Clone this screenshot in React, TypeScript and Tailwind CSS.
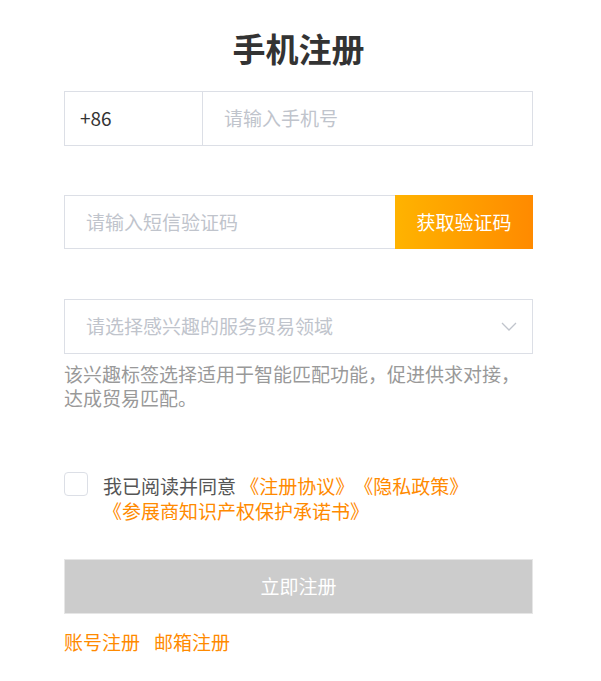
import { useState } from "react";

const font = "font-['Microsoft_YaHei','Noto_Sans_CJK_SC',sans-serif]";

export default function App() {
  const [agreed, setAgreed] = useState(false);

  return (
    <div className={`min-h-screen bg-white ${font}`}>
      <div className="ml-[64px] w-[469px] pt-[28px]">
        <h1 className="text-center text-[33px] leading-[40px] font-bold text-[#333]">手机注册</h1>

        <div className="mt-[23px] flex h-[55px] border border-[#dcdfe6]">
          <div className="flex w-[138px] items-center border-r border-[#dcdfe6] pl-[15px] text-[19px] text-[#333]">
            +86
          </div>
          <input
            className="min-w-0 flex-1 bg-transparent pl-[21px] text-[19px] text-[#333] outline-none placeholder:text-[#c0c4cc]"
            placeholder="请输入手机号"
          />
        </div>

        <div className="mt-[49px] flex h-[54px]">
          <input
            className="min-w-0 flex-1 border border-r-0 border-[#dcdfe6] bg-transparent pl-[21px] text-[19px] text-[#333] outline-none placeholder:text-[#c0c4cc]"
            placeholder="请输入短信验证码"
          />
          <button className="w-[138px] bg-gradient-to-r from-[#ffb300] to-[#ff8a00] text-[19px] text-white">
            获取验证码
          </button>
        </div>

        <div className="mt-[50px] flex h-[55px] items-center justify-between border border-[#dcdfe6] pl-[21px] pr-[15px]">
          <span className="text-[19px] text-[#c0c4cc]">请选择感兴趣的服务贸易领域</span>
          <svg width="16" height="9" viewBox="0 0 16 9" fill="none">
            <path d="M1 1l7 7 7-7" stroke="#c0c4cc" strokeWidth="1.3" />
          </svg>
        </div>

        <p className="mt-[8px] text-[19px] leading-[24px] text-[#999]">
          该兴趣标签选择适用于智能匹配功能，促进供求对接，达成贸易匹配。
        </p>

        <div className="mt-[64px] flex items-start">
          <button
            onClick={() => setAgreed(!agreed)}
            className={`-mt-[2px] h-[24px] w-[24px] shrink-0 rounded-[4px] border ${
              agreed ? "border-[#ff8a00] bg-[#ff8a00]" : "border-[#dcdfe6] bg-white"
            }`}
          />
          <p className="ml-[15px] -mt-[1px] text-[19px] leading-[25px] text-[#555]">
            我已阅读并同意{" "}
            <a href="#" className="inline-block text-[#ff8a00]">《注册协议》</a>
            <a href="#" className="inline-block text-[#ff8a00]">《隐私政策》</a>
            <a href="#" className="inline-block text-[#ff8a00]">《参展商知识产权保护承诺书》</a>
          </p>
        </div>

        <button className="mt-[36px] h-[55px] w-full border border-[#e6e6e6] bg-[#cccccc] text-[19px] text-white">
          立即注册
        </button>

        <div className="mt-[15px] flex gap-[14px] text-[19px] leading-[26px] text-[#ff8a00]">
          <a href="#">账号注册</a>
          <a href="#">邮箱注册</a>
        </div>
      </div>
    </div>
  );
}
